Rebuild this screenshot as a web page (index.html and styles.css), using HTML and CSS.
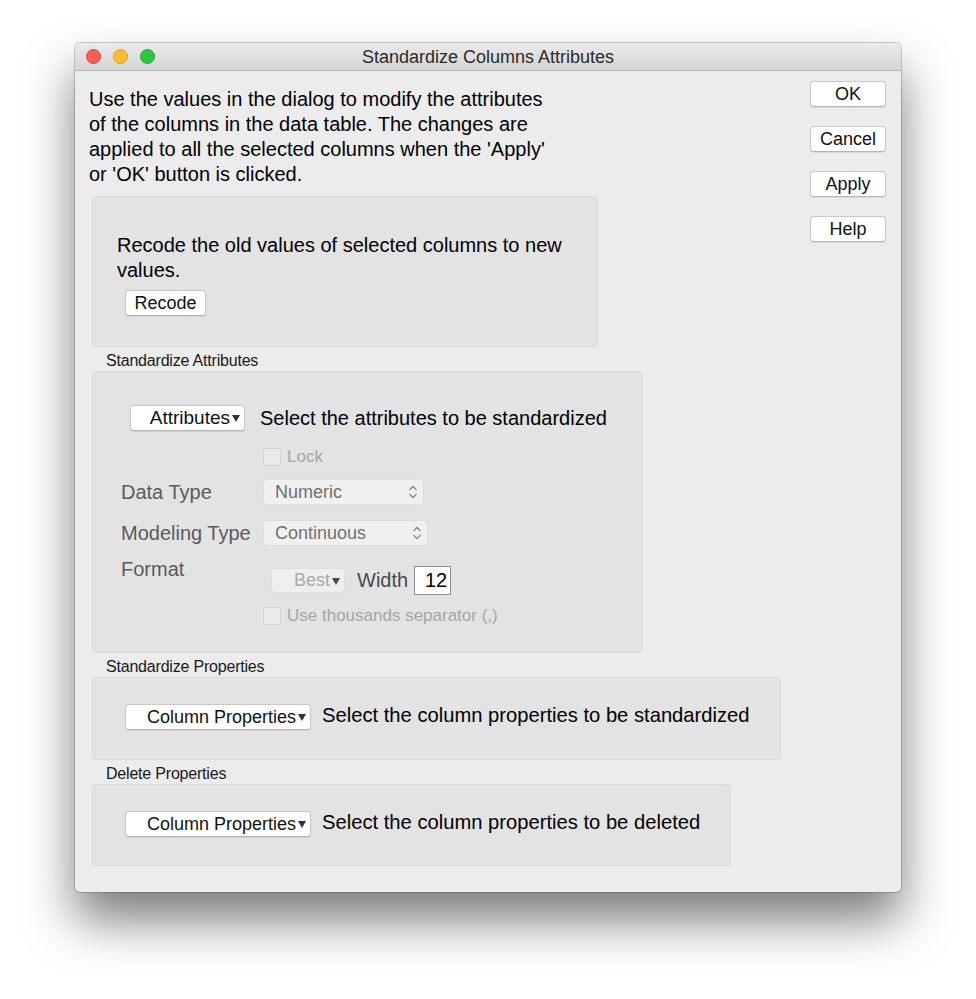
FILE: index.html
```html
<!DOCTYPE html>
<html>
<head>
<meta charset="utf-8">
<link rel="stylesheet" href="styles.css">
<title>Standardize Columns Attributes</title>
</head>
<body>
<div class="window">
  <div class="titlebar">
    <div class="lights">
      <span class="light red"></span>
      <span class="light yellow"></span>
      <span class="light green"></span>
    </div>
    <div class="title">Standardize Columns Attributes</div>
  </div>
  <div class="content">
    <div class="main">
      <p class="intro">Use the values in the dialog to modify the attributes<br>of the columns in the data table. The changes are<br>applied to all the selected columns when the 'Apply'<br>or 'OK' button is clicked.</p>

      <div class="box box-recode">
        <p class="recode-text">Recode the old values of selected columns to new<br>values.</p>
        <button class="btn recode-btn">Recode</button>
      </div>

      <div class="group-label">Standardize Attributes</div>
      <div class="box box-attr">
        <div class="row attr-row">
          <button class="btn popup attr-popup">Attributes<span class="tri"></span></button>
          <span class="hint">Select the attributes to be standardized</span>
        </div>
        <div class="row lock-row">
          <span class="check"></span><span class="dis-text">Lock</span>
        </div>
        <div class="row field-row dt-row">
          <span class="field-label">Data Type</span>
          <span class="select sel-numeric">Numeric<svg class="chev" width="10" height="16" viewBox="0 0 10 16"><path d="M1.5 6 L5 2.5 L8.5 6 M1.5 10 L5 13.5 L8.5 10" fill="none" stroke="#8a8a8a" stroke-width="1.3"/></svg></span>
        </div>
        <div class="row field-row mt-row">
          <span class="field-label">Modeling Type</span>
          <span class="select sel-cont">Continuous<svg class="chev" width="10" height="16" viewBox="0 0 10 16"><path d="M1.5 6 L5 2.5 L8.5 6 M1.5 10 L5 13.5 L8.5 10" fill="none" stroke="#8a8a8a" stroke-width="1.3"/></svg></span>
        </div>
        <div class="row fmt-row">
          <span class="field-label fmt-label">Format</span>
          <div class="fmt-controls">
            <span class="best">Best<span class="tri tri-dark"></span></span>
            <span class="width-label">Width</span>
            <span class="width-input">12</span>
          </div>
        </div>
        <div class="row sep-row">
          <span class="check"></span><span class="dis-text">Use thousands separator (,)</span>
        </div>
      </div>

      <div class="group-label">Standardize Properties</div>
      <div class="box box-prop box-std">
        <button class="btn popup col-popup">Column Properties<span class="tri"></span></button>
        <span class="hint">Select the column properties to be standardized</span>
      </div>

      <div class="group-label">Delete Properties</div>
      <div class="box box-prop box-del">
        <button class="btn popup col-popup">Column Properties<span class="tri"></span></button>
        <span class="hint">Select the column properties to be deleted</span>
      </div>
    </div>
    <div class="side">
      <button class="btn side-btn">OK</button>
      <button class="btn side-btn">Cancel</button>
      <button class="btn side-btn">Apply</button>
      <button class="btn side-btn">Help</button>
    </div>
  </div>
</div>
</body>
</html>
```
FILE: styles.css
```css
* { box-sizing: border-box; }
html, body {
  margin: 0;
  padding: 0;
  background: #ffffff;
  font-family: "Liberation Sans", Arial, sans-serif;
  color: #000;
}
body {
  width: 976px;
  height: 999px;
  padding: 43px 0 0 75px;
}
.window {
  width: 826px;
  height: 849px;
  background: #ececec;
  border-radius: 5px;
  box-shadow: 0 0 0 1px rgba(0,0,0,0.18), 0 28px 50px rgba(0,0,0,0.52);
  overflow: hidden;
  display: flex;
  flex-direction: column;
}
.titlebar {
  height: 28px;
  flex: none;
  background: linear-gradient(#ebebeb, #d4d4d4);
  border-bottom: 1px solid #b7b7b7;
  display: flex;
  align-items: center;
  position: relative;
}
.lights {
  display: flex;
  gap: 12px;
  padding-left: 11px;
}
.light {
  width: 15px;
  height: 15px;
  border-radius: 50%;
  display: block;
}
.red { background: #fc5f57; border: 1px solid #e0443e; }
.yellow { background: #fdbc2e; border: 1px solid #dea123; }
.green { background: #28c840; border: 1px solid #1dad2b; }
.title {
  position: absolute;
  left: 0;
  right: 0;
  top: 0;
  line-height: 28px;
  text-align: center;
  font-size: 18px;
  color: #2b2b2b;
  pointer-events: none;
}
.content {
  display: flex;
  padding: 0 15px 0 14px;
  flex: 1;
}
.main {
  flex: 1;
  display: flex;
  flex-direction: column;
  align-items: flex-start;
}
.intro {
  margin: 16px 0 0 0;
  font-size: 20px;
  line-height: 25px;
}
.box {
  background: #e3e3e3;
  border: 1px solid #dadada;
  border-radius: 4px;
  margin-left: 3px;
}
.box-recode {
  margin-top: 9px;
  width: 506px;
  height: 151px;
  padding: 36px 0 0 24px;
}
.recode-text {
  margin: 0;
  font-size: 20px;
  line-height: 25px;
}
.btn {
  font-family: "Liberation Sans", Arial, sans-serif;
  background: #ffffff;
  border: 1px solid #c9c9c9;
  border-bottom-color: #b5b5b5;
  border-radius: 4px;
  color: #111;
  padding: 0;
  box-shadow: 0 0.5px 1px rgba(0,0,0,0.08);
}
.recode-btn {
  margin-top: 7px;
  margin-left: 8px;
  width: 81px;
  height: 26px;
  font-size: 18px;
}
.group-label {
  font-size: 16px;
  line-height: 18px;
  margin: 5px 0 0 17px;
  color: #1a1a1a;
  letter-spacing: -0.2px;
}
.box-attr {
  margin-top: 1px;
  width: 551px;
  height: 282px;
  padding: 33px 0 0 28px;
  display: flex;
  flex-direction: column;
}
.row {
  display: flex;
  align-items: center;
}
.popup {
  height: 26px;
  font-size: 18px;
  display: flex;
  align-items: center;
  justify-content: flex-end;
  padding-right: 4px;
}
.tri {
  display: inline-block;
  width: 0;
  height: 0;
  border-left: 4.5px solid transparent;
  border-right: 4.5px solid transparent;
  border-top: 7px solid #333;
  margin-left: 2px;
  margin-top: 1px;
}
.attr-row { margin-left: 9px; height: 26px; }
.attr-popup { width: 115px; font-size: 19px; }
.hint {
  font-size: 20px;
  margin-left: 15px;
}
.lock-row { margin-top: 17px; margin-left: 142px; height: 18px; }
.check {
  width: 18px;
  height: 18px;
  border: 1px solid #d2d2d2;
  background: #ebebeb;
  border-radius: 3px;
  display: inline-block;
}
.dis-text {
  font-size: 17px;
  color: #a6a6a6;
  margin-left: 6px;
}
.field-row { height: 26px; }
.dt-row { margin-top: 13px; }
.mt-row { margin-top: 15px; }
.field-label {
  width: 142px;
  font-size: 20px;
  color: #5b5b5b;
}
.select {
  height: 26px;
  background: #f0f0f0;
  border: 1px solid #dedede;
  border-radius: 4px;
  font-size: 18px;
  color: #707070;
  display: flex;
  align-items: center;
  justify-content: space-between;
  padding: 0 5px 0 11px;
}
.sel-numeric { width: 161px; }
.sel-cont { width: 165px; }
.chev { display: block; }
.fmt-row { margin-top: 10px; align-items: flex-start; }
.fmt-label { line-height: 26px; }
.fmt-controls {
  display: flex;
  align-items: center;
  margin-top: 10px;
  margin-left: 8px;
}
.best {
  width: 74px;
  height: 25px;
  background: #efefef;
  border: 1px solid #dedede;
  border-radius: 4px;
  font-size: 18px;
  color: #a9a9a9;
  display: flex;
  align-items: center;
  justify-content: flex-end;
  padding-right: 4px;
}
.tri-dark { border-top-color: #4a4a4a; }
.width-label {
  font-size: 20px;
  color: #4a4a4a;
  margin-left: 12px;
}
.width-input {
  width: 37px;
  height: 29px;
  margin-left: 6px;
  background: #fff;
  border: 1px solid #8d8d8d;
  font-size: 20px;
  text-align: right;
  padding-right: 3px;
  line-height: 27px;
  color: #000;
}
.sep-row { margin-top: 12px; margin-left: 142px; height: 18px; }
.box-prop {
  margin-top: 1px;
  display: flex;
  align-items: flex-start;
  padding: 26px 0 0 32px;
}
.box-std { width: 689px; height: 83px; }
.box-del { width: 639px; height: 82px; }
.col-popup { width: 186px; }
.box-prop .hint { margin-left: 11px; line-height: 22px; font-size: 20.2px; }
.side {
  width: 76px;
  flex: none;
  display: flex;
  flex-direction: column;
  padding-top: 10px;
  gap: 19px;
}
.side-btn {
  width: 76px;
  height: 26px;
  font-size: 18px;
}
```
